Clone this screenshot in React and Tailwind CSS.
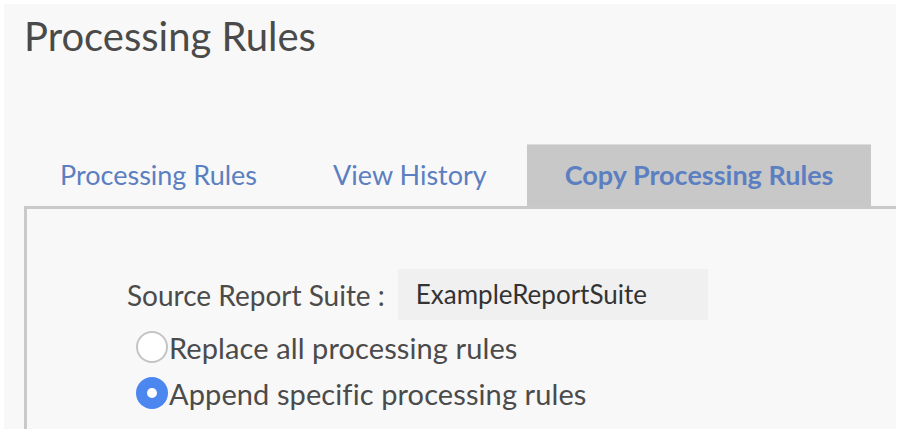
import React from 'react';

const tabs = [
  { label: 'Processing Rules', active: false },
  { label: 'View History', active: false },
  { label: 'Copy Processing Rules', active: true },
];

const Radio = ({ checked, label }) => (
  <label className="flex items-center h-[46px]">
    {checked ? (
      <span className="w-[32px] h-[32px] rounded-full bg-[#4b87ee] flex items-center justify-center">
        <span className="w-[10px] h-[10px] rounded-full bg-white" />
      </span>
    ) : (
      <span className="w-[32px] h-[32px] rounded-full bg-white border-2 border-[#c4c4c4]" />
    )}
    <span className="ml-px text-[29px] tracking-[0.1px] text-[#4b4b4b] leading-none">{label}</span>
  </label>
);

export default function App() {
  return (
    <div className="w-[900px] h-[438px] bg-white pt-[4px] pl-[4px] font-['Lato',sans-serif]">
      <div className="w-[892px] h-[425px] bg-[#f8f8f8] flex flex-col">
        {/* Page title */}
        <h1 className="pl-[20px] pt-[8px] text-[40px] leading-[1.2] text-[#4a4a4a]">Processing Rules</h1>

        {/* Tabs */}
        <div className="flex items-end gap-1 ml-[20px] mt-[84px]">
          {tabs.map((t) => (
            <div
              key={t.label}
              className={
                t.active
                  ? 'h-[62px] px-[38px] flex items-center bg-[#c8c8c8] border-t border-[#dcdcdc] text-[27px] font-bold text-[#5b7fc1]'
                  : 'h-[62px] px-[36px] flex items-center text-[27px] text-[#5b7fc1]'
              }
            >
              {t.label}
            </div>
          ))}
        </div>

        {/* Tab content */}
        <div className="flex-1 ml-[20px] border-l-[3px] border-t-[3px] border-[#c9c9c9] pl-[100px] pt-[60px]">
          <div className="flex items-center">
            <span className="text-[28px] text-[#4b4b4b]">Source Report Suite :</span>
            <div className="ml-[13px] w-[310px] h-[51px] bg-[#f0f0f0] flex items-center pl-[18px] text-[26px] text-[#333]">
              ExampleReportSuite
            </div>
          </div>
          <div className="pl-[9px] mt-[4px]">
            <Radio checked={false} label="Replace all processing rules" />
            <Radio checked label="Append specific processing rules" />
          </div>
        </div>
      </div>
    </div>
  );
}
